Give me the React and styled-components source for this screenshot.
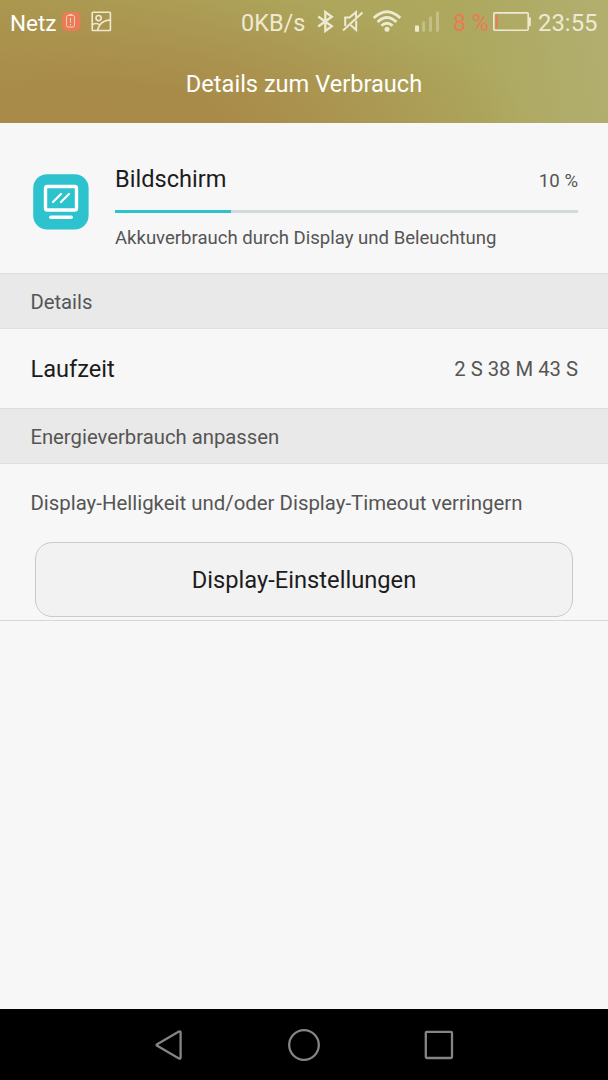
import React from "react";
import styled, { createGlobalStyle } from "styled-components";

const usage = { percent: 10, fill: 25 };

export default function App() {
	return (
		<Screen>
			<GlobalStyle />
			<Header>
				<StatusBar>
					<StatusText $width={52} $size={22.5} $color="#ffffff">Netz</StatusText>
					<BatteryWarning />
					<PictureIcon />
					<Spacer />
					<StatusText $width={76} $size={23.5}>0KB/s</StatusText>
					<BluetoothIcon />
					<MuteIcon />
					<WifiIcon />
					<SignalIcon />
					<StatusText $width={39} $left={14} $size={23.3} $color="#ea7a55">8 %</StatusText>
					<BatteryIcon />
					<StatusText $width={61} $left={7}>23:55</StatusText>
				</StatusBar>
				<Title>Details zum Verbrauch</Title>
			</Header>

			<UsageRow>
				<DisplayIcon />
				<UsageBody>
					<UsageTop>
						<Name>Bildschirm</Name>
						<Percent>{usage.percent} %</Percent>
					</UsageTop>
					<Track>
						<Bar style={{ width: `${usage.fill}%` }} />
					</Track>
					<Summary>Akkuverbrauch durch Display und Beleuchtung</Summary>
				</UsageBody>
			</UsageRow>

			<SectionHeader>Details</SectionHeader>
			<DetailRow>
				<Name>Laufzeit</Name>
				<Value>2 S 38 M 43 S</Value>
			</DetailRow>

			<SectionHeader>Energieverbrauch anpassen</SectionHeader>
			<Adjust>
				<Hint>Display-Helligkeit und/oder Display-Timeout verringern</Hint>
				<SettingsButton>Display-Einstellungen</SettingsButton>
			</Adjust>

			<NavBar>
				<NavButton aria-label="Zurück">
					<svg width="36" height="36" viewBox="0 0 36 36">
						<path d="M6.2 17.2L27.9 4.6Q29.6 4 29.6 5.6V30.4Q29.6 32 27.9 31.4L6.2 18.8Q4.9 18 6.2 17.2Z" />
					</svg>
				</NavButton>
				<NavButton aria-label="Start">
					<svg width="36" height="36" viewBox="0 0 36 36">
						<circle cx="18" cy="18" r="14.8" />
					</svg>
				</NavButton>
				<NavButton aria-label="Übersicht">
					<svg width="36" height="36" viewBox="0 0 36 36">
						<rect x="4.8" y="4.8" width="26.2" height="26.2" rx="1" />
					</svg>
				</NavButton>
			</NavBar>
		</Screen>
	);
}

function BatteryWarning() {
	return (
		<Glyph $left={0} width="19" height="24" viewBox="0 0 19 24">
			<rect x="0" y="2" width="18.5" height="19" rx="5" fill="#e97c56" />
			<g fill="none" stroke="#f5cfae" strokeWidth="1">
				<rect x="4.5" y="5.5" width="8" height="11.5" rx="1.5" />
				<path d="M6.8 4.5h3.6M8.5 8v4.8M8.5 14v1.3" />
			</g>
		</Glyph>
	);
}

function PictureIcon() {
	return (
		<Glyph $left={10} width="21" height="24" viewBox="0 0 21 24">
			<g fill="none" stroke="#eeead2" strokeWidth="1.6">
				<rect x="1.2" y="2.3" width="18.2" height="18.2" rx="0.8" />
				<circle cx="7.6" cy="8.1" r="2.6" />
				<path d="M1.5 14.5Q5.5 12.2 9 15M6.4 20.3Q8.6 10.6 19.3 9.9" />
			</g>
		</Glyph>
	);
}

function BluetoothIcon() {
	return (
		<Glyph $left={0} width="17" height="24" viewBox="0 0 17 24">
			<path
				d="M1.2 6.5L14.8 16.3L8.3 21V2L14.8 6.7L1.2 16.5"
				fill="none"
				stroke="#eeead2"
				strokeWidth="2.3"
			/>
		</Glyph>
	);
}

function MuteIcon() {
	return (
		<Glyph $left={8} width="22" height="24" viewBox="0 0 22 24">
			<g fill="none" stroke="#eeead2" strokeWidth="2">
				<path d="M1 20.5L20.5 2.5" />
				<path d="M3.2 16V7.6H7.5L14 2.2V7.5M14.2 10.5V20L8.6 15" />
			</g>
		</Glyph>
	);
}

function WifiIcon() {
	return (
		<Glyph $left={9} width="28" height="24" viewBox="0 0 28 24">
			<g fill="none" stroke="#eeead2" strokeWidth="2.8">
				<path d="M0.8 8Q14 -4.4 27.2 8" />
				<path d="M4.6 12Q14 3.1 23.4 12" />
				<path d="M8.4 15.8Q14 10.6 19.6 15.8" />
			</g>
			<circle cx="14" cy="19.2" r="2.5" fill="#eeead2" />
		</Glyph>
	);
}

function SignalIcon() {
	return (
		<Glyph $left={14} width="24" height="24" viewBox="0 0 24 24">
			<rect x="0" y="15.5" width="4" height="6.3" rx="0.8" fill="#eeead2" />
			<g fill="#eeead2" fillOpacity="0.35">
				<rect x="7.1" y="11.5" width="3" height="10.3" rx="0.8" />
				<rect x="14" y="6.5" width="3" height="15.3" rx="0.8" />
				<rect x="21" y="1.4" width="3" height="20.4" rx="0.8" />
			</g>
		</Glyph>
	);
}

function BatteryIcon() {
	return (
		<Glyph $left={1} width="38" height="24" viewBox="0 0 38 24">
			<rect x="0.8" y="2.9" width="34.4" height="17.4" rx="1.2" fill="none" stroke="#eeead2" strokeWidth="1.6" />
			<path d="M36 7.2h0.8q1 0 1 1v7q0 1-1 1H36z" fill="#eeead2" />
			<rect x="2.6" y="4.8" width="2" height="13.5" fill="#ea7a55" />
		</Glyph>
	);
}

function DisplayIcon() {
	return (
		<AppIcon width="56" height="56" viewBox="0 0 56 56">
			<rect x="0.2" y="0.2" width="55.4" height="55.4" rx="14" fill="#2cc2ce" />
			<g fill="none" stroke="#ffffff" strokeLinecap="round">
				<rect x="12.5" y="12.5" width="31" height="23.5" rx="1.8" strokeWidth="3.4" />
				<path d="M17.8 43.3H38.2" strokeWidth="3.4" />
				<path d="M20 28L28 20M28 28L36 20" strokeWidth="2.2" />
			</g>
		</AppIcon>
	);
}

const GlobalStyle = createGlobalStyle`
	* {
		box-sizing: border-box;
	}
	body {
		margin: 0;
		font-family: Roboto, "Liberation Sans", sans-serif;
	}
`;

const Screen = styled.div`
	display: flex;
	flex-direction: column;
	width: 608px;
	height: 1080px;
	overflow: hidden;
	background: #f7f7f7;
	color: #1c1c1c;
`;

const Header = styled.header`
	height: 123px;
	background:
		radial-gradient(ellipse 440px 140px at 90px 125px, #a98a48 0%, #a98b49 30%, rgba(169, 138, 72, 0) 100%),
		linear-gradient(80deg, #ab9850 0%, #ada65c 55%, #ada85e 75%, #b1ae6e 97%);
`;

const StatusBar = styled.div`
	display: flex;
	align-items: center;
	height: 43px;
	padding: 0 9px 0 10px;
`;

const StatusText = styled.span`
	flex: none;
	width: ${(p) => p.$width}px;
	margin-left: ${(p) => p.$left || 0}px;
	font-size: ${(p) => p.$size || 23.9}px;
	line-height: 28px;
	padding-top: 2px;
	white-space: nowrap;
	color: ${(p) => p.$color || "#eeead2"};
`;

const Glyph = styled.svg`
	flex: none;
	margin-left: ${(p) => p.$left}px;
`;

const Spacer = styled.div`
	flex: 1;
`;

const Title = styled.h1`
	margin: 0;
	height: 80px;
	line-height: 82px;
	font-size: 23.6px;
	font-weight: 400;
	text-align: center;
	color: #ffffff;
`;

const UsageRow = styled.section`
	display: flex;
	height: 150px;
	padding: 38px 30px 0 33px;
`;

const AppIcon = styled.svg`
	flex: none;
	margin: 13px 26px 0 0;
`;

const UsageBody = styled.div`
	flex: 1;
`;

const UsageTop = styled.div`
	display: flex;
	justify-content: space-between;
	align-items: baseline;
	height: 49px;
	line-height: 36px;
`;

const Name = styled.span`
	font-size: 23.6px;
`;

const Percent = styled.span`
	font-size: 18.6px;
	color: #555555;
`;

const Track = styled.div`
	height: 3px;
	background: #d2dadb;
`;

const Bar = styled.div`
	height: 100%;
	background: #2cc2ce;
`;

const Summary = styled.p`
	margin: 13px 0 0;
	font-size: 18.56px;
	line-height: 24px;
	color: #555555;
`;

const SectionHeader = styled.h2`
	margin: 0;
	height: 56px;
	padding: 0 30.4px;
	border-top: 1px solid #d9dddd;
	border-bottom: 1px solid #e0e0e0;
	background: #e9e9e9;
	font-size: 20.3px;
	font-weight: 400;
	line-height: 56px;
	color: #555555;
`;

const DetailRow = styled.div`
	display: flex;
	justify-content: space-between;
	align-items: center;
	height: 79px;
	padding: 1px 30px 0 30.5px;
`;

const Value = styled.span`
	font-size: 20.25px;
	color: #555555;
`;

const Adjust = styled.section`
	height: 157px;
	padding: 27px 35px 0;
	border-bottom: 1px solid #d3d8d8;
`;

const Hint = styled.p`
	margin: 0 0 27px -4.6px;
	font-size: 20.4px;
	line-height: 24px;
	color: #555555;
`;

const SettingsButton = styled.button`
	display: block;
	width: 538px;
	height: 75px;
	padding: 1px 0 0;
	border: 1px solid #c6cbcb;
	border-radius: 17px;
	background: #f2f2f2;
	font-family: inherit;
	font-size: 23.7px;
	color: #1c1c1c;
`;

const NavBar = styled.nav`
	display: flex;
	justify-content: center;
	gap: 99px;
	height: 71px;
	margin-top: auto;
	padding-top: 18px;
	background: #000000;
`;

const NavButton = styled.button`
	width: 36px;
	height: 36px;
	padding: 0;
	border: 0;
	background: none;

	svg {
		display: block;
		fill: none;
		stroke: #858585;
		stroke-width: 2.3;
	}
`;
